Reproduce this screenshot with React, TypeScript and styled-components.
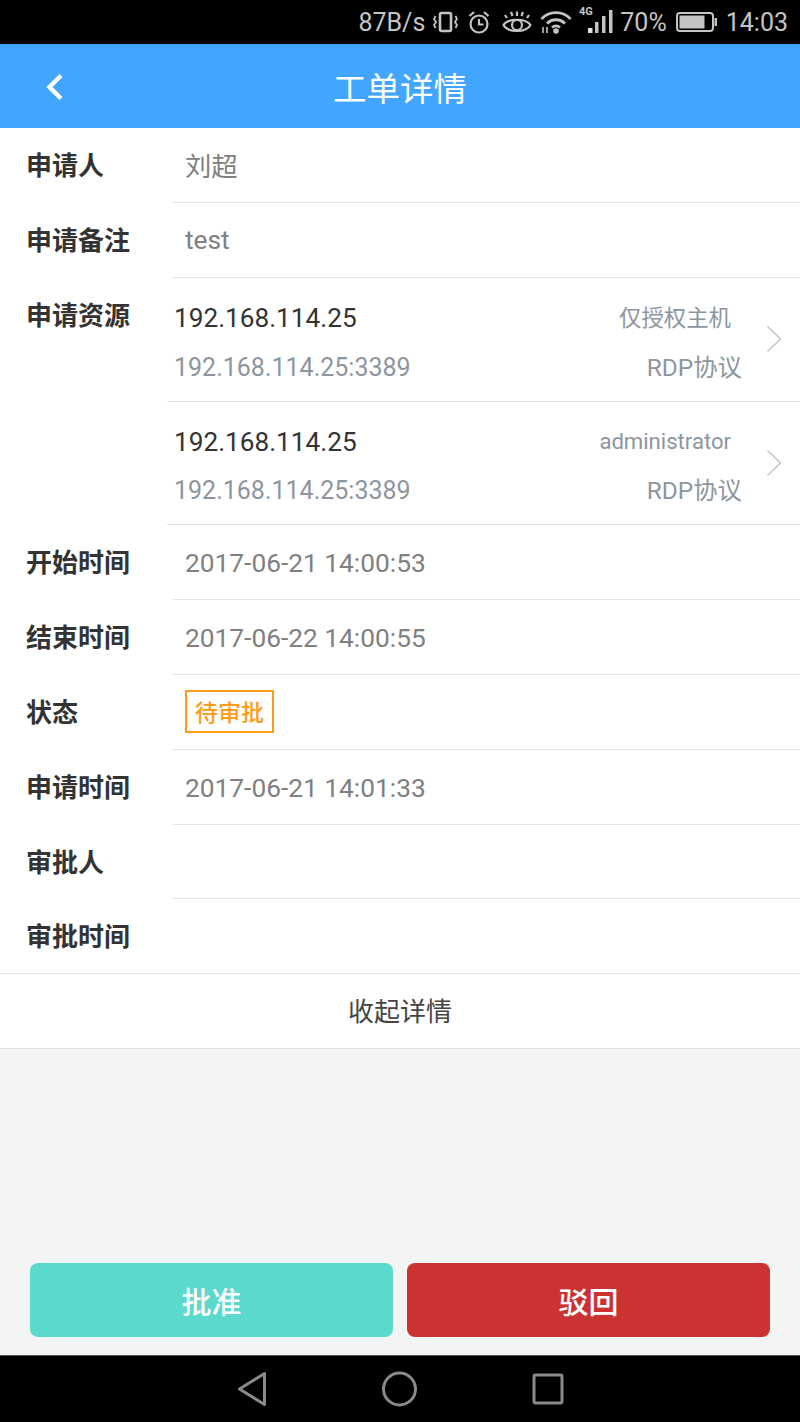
import styled, { createGlobalStyle } from 'styled-components'

const GlobalStyle = createGlobalStyle`
  html, body {
    margin: 0;
    padding: 0;
    background: #f4f4f4;
  }
  * {
    box-sizing: border-box;
  }
`

const Page = styled.div`
  width: 800px;
  height: 1422px;
  display: flex;
  flex-flow: column nowrap;
  overflow: hidden;
  background: #f4f4f4;
  font-family: Roboto, 'Noto Sans CJK SC', sans-serif;
`

const StatusBar = styled.div`
  height: 44px;
  flex: none;
  display: flex;
  align-items: center;
  justify-content: flex-end;
  padding-right: 12px;
  background: #000;
  color: #c4c4c4;
  font-size: 25px;
  white-space: nowrap;
`

const StatusText = styled.span<{ gap?: number }>`
  margin-left: ${({ gap }) => gap ?? 0}px;
  margin-top: 2px;
  line-height: 40px;
`

const StatusIcon = styled.svg<{ gap?: number }>`
  flex: none;
  margin-left: ${({ gap }) => gap ?? 0}px;
`

const Header = styled.div`
  height: 84px;
  flex: none;
  position: relative;
  display: flex;
  align-items: center;
  justify-content: center;
  background: #42a5ff;
  color: #fff;
  font-size: 33.5px;
`

const BackIcon = styled.svg`
  position: absolute;
  left: 45px;
  top: 29px;
`

const Details = styled.div`
  background: #fff;
  flex: none;
`

const Row = styled.div<{ tight?: boolean }>`
  display: flex;
  height: ${({ tight }) => (tight ? 74 : 75)}px;
`

const Label = styled.div`
  width: 173px;
  flex: none;
  padding: 1px 0 0 26px;
  line-height: 75px;
  font-size: 26px;
  font-weight: 700;
  color: #333;
`

const Value = styled.div<{ plain?: boolean }>`
  flex: 1;
  display: flex;
  align-items: center;
  padding-left: 12px;
  font-size: 26.3px;
  color: #808080;
  border-bottom: ${({ plain }) => (plain ? 'none' : '1px solid #e2e2e2')};
`

const NameValue = styled(Value)`
  padding-bottom: 1px;
`

const DateValue = styled(Value)`
  padding-top: 2px;
`

const StatusTag = styled.span`
  height: 43px;
  width: 89px;
  margin-top: -2px;
  display: flex;
  align-items: center;
  justify-content: center;
  border: 2px solid #ff9c19;
  font-size: 23px;
  font-weight: 500;
  color: #ff9c19;
`

const ResourceRow = styled.div`
  display: flex;
`

const ResourceLabel = styled(Label)`
  width: 167px;
`

const ResourceList = styled.div`
  flex: 1;
`

const Resource = styled.div`
  height: 123.5px;
  display: flex;
  align-items: center;
  border-bottom: 1px solid #e2e2e2;
  padding: 0 18px 0 7px;
`

const ResourceInfo = styled.div`
  flex: 1;
  display: flex;
  flex-flow: column nowrap;
  gap: 13px;
  margin-top: 3px;
`

const InfoLine = styled.div<{ inset?: boolean }>`
  display: flex;
  justify-content: space-between;
  align-items: center;
  height: 36px;
  padding-right: ${({ inset }) => (inset ? 35 : 24)}px;
`

const HostName = styled.span`
  padding-top: 4px;
  font-size: 26.2px;
  color: #333;
`

const Address = styled.span`
  padding-top: 4px;
  font-size: 25px;
  color: #8d969e;
`

const Scope = styled.span<{ latin?: boolean }>`
  padding-top: ${({ latin }) => (latin ? 2 : 0)}px;
  font-size: ${({ latin }) => (latin ? 22.1 : 22.4)}px;
  color: #8d969e;
`

const Protocol = styled.span`
  font-size: 24.4px;
  color: #8d969e;
`

const Collapse = styled.div`
  height: 76px;
  display: flex;
  align-items: center;
  justify-content: center;
  padding-bottom: 3px;
  font-size: 26px;
  color: #444;
  background: #fff;
  border-top: 1px solid #e2e2e2;
  border-bottom: 1px solid #e2e2e2;
`

const Spacer = styled.div`
  flex: 1;
`

const Actions = styled.div`
  flex: none;
  display: flex;
  gap: 14px;
  padding: 0 30px 18px;
`

const ActionButton = styled.div<{ color: string }>`
  flex: 1;
  height: 74px;
  display: flex;
  align-items: center;
  justify-content: center;
  border-radius: 8px;
  background: ${({ color }) => color};
  color: #fff;
  font-size: 30px;
  font-weight: 500;
`

const NavBar = styled.div`
  height: 67px;
  flex: none;
  display: flex;
  align-items: center;
  justify-content: center;
  gap: 114.5px;
  background: #000;
  border-top: 1px solid #555;
`

const Chevron = () => (
  <svg width="16" height="28" viewBox="0 0 16 28" fill="none">
    <path d="M1.5 1.5 L14.5 14 L1.5 26.5" stroke="#c6c6c6" strokeWidth="1.6" />
  </svg>
)

const details = [
  { label: '开始时间', value: '2017-06-21 14:00:53' },
  { label: '结束时间', value: '2017-06-22 14:00:55' },
]

const resources = [
  { scope: '仅授权主机', latin: false },
  { scope: 'administrator', latin: true },
]

export default function App() {
  return (
    <Page>
      <GlobalStyle />
      <StatusBar>
        <StatusText>87B/s</StatusText>
        <StatusIcon gap={8} width="25" height="24" viewBox="0 0 25 24" fill="none" stroke="#c4c4c4">
          <rect x="7" y="3" width="11" height="18" rx="1.5" strokeWidth="2.6" />
          <path d="M2.5 6 l-1.5 3 l2 3 l-2 3 l1.5 3 M22.5 6 l1.5 3 l-2 3 l2 3 l-1.5 3" strokeWidth="1.8" />
        </StatusIcon>
        <StatusIcon gap={10} width="22" height="24" viewBox="0 0 22 24" fill="none" stroke="#c4c4c4">
          <circle cx="11" cy="14" r="8.5" strokeWidth="2.2" />
          <path d="M11 9 V14.5 H15.5 M1.5 6 L6 2 M20.5 6 L16 2" strokeWidth="2.2" />
        </StatusIcon>
        <StatusIcon gap={12} width="30" height="24" viewBox="0 0 30 24" fill="none" stroke="#c4c4c4">
          <path d="M1.5 15 C6 8 24 8 28.5 15 C24 23 6 23 1.5 15 Z" strokeWidth="2.2" />
          <circle cx="15" cy="15" r="5" strokeWidth="2.2" />
          <path d="M5 8 L3 5 M10.5 6 L9 2 M15 6 V1.5 M19.5 6 L21 2 M25 8 L27 5" strokeWidth="2.2" />
        </StatusIcon>
        <StatusIcon gap={8} width="32" height="24" viewBox="0 0 32 24" fill="none" stroke="#c4c4c4">
          <path d="M1.5 9 C9 0.5 23 0.5 30.5 9 M7 13.5 C12 8.5 20 8.5 25 13.5 M12 17.5 C14.5 15.5 17.5 15.5 20 17.5" strokeWidth="2.8" />
          <circle cx="16" cy="21" r="2.8" fill="#c4c4c4" stroke="none" />
          <path d="M3 17 v6 M7 23 v-6" strokeWidth="1.6" />
        </StatusIcon>
        <StatusIcon gap={7} width="35" height="38" viewBox="0 0 35 38">
          <text x="0" y="12" fontSize="11" fontWeight="700" fill="#c4c4c4">4G</text>
          <rect x="9" y="25" width="4.5" height="5" fill="#e0e0e0" />
          <rect x="16" y="19" width="3.5" height="11" fill="#c4c4c4" />
          <rect x="23" y="13" width="3.5" height="17" fill="#c4c4c4" />
          <rect x="30" y="7" width="3.5" height="23" fill="#c4c4c4" />
        </StatusIcon>
        <StatusText gap={6}>70%</StatusText>
        <StatusIcon gap={9} width="41" height="20" viewBox="0 0 41 20" fill="none">
          <rect x="1" y="1" width="36" height="18" rx="3" stroke="#c4c4c4" strokeWidth="2" />
          <rect x="3.5" y="3.5" width="25" height="13" fill="#c4c4c4" />
          <rect x="38.5" y="6" width="2.5" height="8" fill="#c4c4c4" />
        </StatusIcon>
        <StatusText gap={9}>14:03</StatusText>
      </StatusBar>
      <Header>
        <BackIcon width="20" height="28" viewBox="0 0 20 28" fill="none">
          <path d="M16 2.5 L4.5 14 L16 25.5" stroke="#fff" strokeWidth="4.5" />
        </BackIcon>
        工单详情
      </Header>
      <Details>
        <Row>
          <Label>申请人</Label>
          <NameValue>刘超</NameValue>
        </Row>
        <Row>
          <Label>申请备注</Label>
          <Value>test</Value>
        </Row>
        <ResourceRow>
          <ResourceLabel>申请资源</ResourceLabel>
          <ResourceList>
            {resources.map((r) => (
              <Resource key={r.scope}>
                <ResourceInfo>
                  <InfoLine inset>
                    <HostName>192.168.114.25</HostName>
                    <Scope latin={r.latin}>{r.scope}</Scope>
                  </InfoLine>
                  <InfoLine>
                    <Address>192.168.114.25:3389</Address>
                    <Protocol>RDP协议</Protocol>
                  </InfoLine>
                </ResourceInfo>
                <Chevron />
              </Resource>
            ))}
          </ResourceList>
        </ResourceRow>
        {details.map((d) => (
          <Row key={d.label}>
            <Label>{d.label}</Label>
            <DateValue>{d.value}</DateValue>
          </Row>
        ))}
        <Row>
          <Label>状态</Label>
          <Value>
            <StatusTag>待审批</StatusTag>
          </Value>
        </Row>
        <Row>
          <Label>申请时间</Label>
          <DateValue>2017-06-21 14:01:33</DateValue>
        </Row>
        <Row tight>
          <Label>审批人</Label>
          <Value />
        </Row>
        <Row tight>
          <Label>审批时间</Label>
          <Value plain />
        </Row>
      </Details>
      <Collapse>收起详情</Collapse>
      <Spacer />
      <Actions>
        <ActionButton color="#5bd9cd">批准</ActionButton>
        <ActionButton color="#cb3333">驳回</ActionButton>
      </Actions>
      <NavBar>
        <svg width="30" height="36" viewBox="0 0 30 36" fill="none">
          <path d="M27.5 2.5 V33.5 L2.5 18 Z" stroke="#8a8a8a" strokeWidth="3" strokeLinejoin="round" />
        </svg>
        <svg width="36" height="36" viewBox="0 0 36 36" fill="none">
          <circle cx="18.5" cy="18" r="16" stroke="#8a8a8a" strokeWidth="3" />
        </svg>
        <svg width="32" height="32" viewBox="0 0 32 32" fill="none">
          <rect x="2" y="2" width="28" height="28" rx="1.5" stroke="#8a8a8a" strokeWidth="3" />
        </svg>
      </NavBar>
    </Page>
  )
}
